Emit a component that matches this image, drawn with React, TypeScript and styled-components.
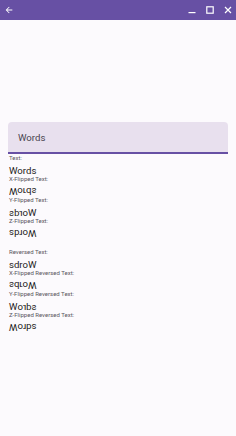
import React from "react";
import styled, { createGlobalStyle } from "styled-components";

type Flip = "none" | "x" | "y" | "z";

const flips: Record<Flip, string> = {
  none: "none",
  x: "scaleY(-1)",
  y: "scaleX(-1)",
  z: "rotate(180deg)",
};

const word = "Words";
const reversed = word.split("").reverse().join("");

const rows: { label: string; text: string; flip: Flip; gap?: boolean }[] = [
  { label: "Text:", text: word, flip: "none" },
  { label: "X-Flipped Text:", text: word, flip: "x" },
  { label: "Y-Flipped Text:", text: word, flip: "y" },
  { label: "Z-Flipped Text:", text: word, flip: "z" },
  { label: "Reversed Text:", text: reversed, flip: "none", gap: true },
  { label: "X-Flipped Reversed Text:", text: reversed, flip: "x" },
  { label: "Y-Flipped Reversed Text:", text: reversed, flip: "y" },
  { label: "Z-Flipped Reversed Text:", text: reversed, flip: "z" },
];

const App: React.FC = () => {
  return (
    <>
      <GlobalStyle />
      <Window>
        <TitleBar>
          <IconButton aria-label="back">
            <svg width="10" height="10" viewBox="0 0 24 24">
              <path d="M20 11H7.8l5.6-5.6L12 4l-8 8 8 8 1.4-1.4L7.8 13H20z" fill="#fff" />
            </svg>
          </IconButton>
          <Controls>
            <IconButton aria-label="minimize">
              <svg width="8" height="8" viewBox="0 0 8 8">
                <rect x="0.5" y="6" width="7" height="1.2" fill="#fff" />
              </svg>
            </IconButton>
            <IconButton aria-label="maximize">
              <svg width="8" height="8" viewBox="0 0 8 8">
                <rect x="0.8" y="0.8" width="6.4" height="6.4" fill="none" stroke="#fff" strokeWidth="1.2" />
              </svg>
            </IconButton>
            <IconButton aria-label="close">
              <svg width="8" height="8" viewBox="0 0 8 8">
                <path d="M1 1L7 7M7 1L1 7" stroke="#fff" strokeWidth="1.2" />
              </svg>
            </IconButton>
          </Controls>
        </TitleBar>
        <Content>
          <Field>
            <FieldText>{word}</FieldText>
          </Field>
          <List>
            {rows.map((row) => (
              <Row key={row.label} $gap={row.gap}>
                <Label>{row.label}</Label>
                <Line>
                  <Sample $flip={row.flip}>{row.text}</Sample>
                </Line>
              </Row>
            ))}
          </List>
        </Content>
      </Window>
    </>
  );
};

const GlobalStyle = createGlobalStyle`
  html, body {
    margin: 0;
    padding: 0;
    background: #fcfafd;
  }
  body {
    font-family: Roboto, "Liberation Sans", sans-serif;
  }
`;

const Window = styled.div`
  width: 236px;
  height: 436px;
  display: flex;
  flex-direction: column;
  background: #fcfafd;
  overflow: hidden;
`;

const TitleBar = styled.div`
  height: 20px;
  background-color: #6750a4;
  display: flex;
  align-items: center;
  justify-content: space-between;
  padding: 0 4px 0 4px;
`;

const Controls = styled.div`
  display: flex;
  align-items: center;
  gap: 10px;
`;

const IconButton = styled.div`
  min-width: 8px;
  height: 20px;
  display: flex;
  align-items: center;
  justify-content: center;

  svg {
    display: block;
  }
`;

const Content = styled.div`
  padding: 102px 8px 0 8px;
  display: flex;
  flex-direction: column;
`;

const Field = styled.div`
  height: 30px;
  background-color: #e8e0ee;
  border-radius: 4px 4px 0 0;
  border-bottom: 2px solid #6750a4;
  display: flex;
  align-items: center;
  padding: 0 10px;
`;

const FieldText = styled.span`
  font-size: 9.6px;
  color: #49454f;
`;

const List = styled.div`
  display: flex;
  flex-direction: column;
  padding-left: 1px;
`;

const Row = styled.div<{ $gap?: boolean }>`
  display: flex;
  flex-direction: column;
  margin-top: ${(p) => (p.$gap ? "10px" : "0")};
`;

const Label = styled.div`
  height: 8px;
  line-height: 8px;
  font-size: 6px;
  color: #5a5660;
  white-space: nowrap;
`;

const Line = styled.div`
  height: 13px;
  line-height: 13px;
`;

const Sample = styled.span<{ $flip: Flip }>`
  display: inline-block;
  font-size: 9.6px;
  color: #1d1b20;
  transform: ${(p) => flips[p.$flip]};
`;

export default App;
